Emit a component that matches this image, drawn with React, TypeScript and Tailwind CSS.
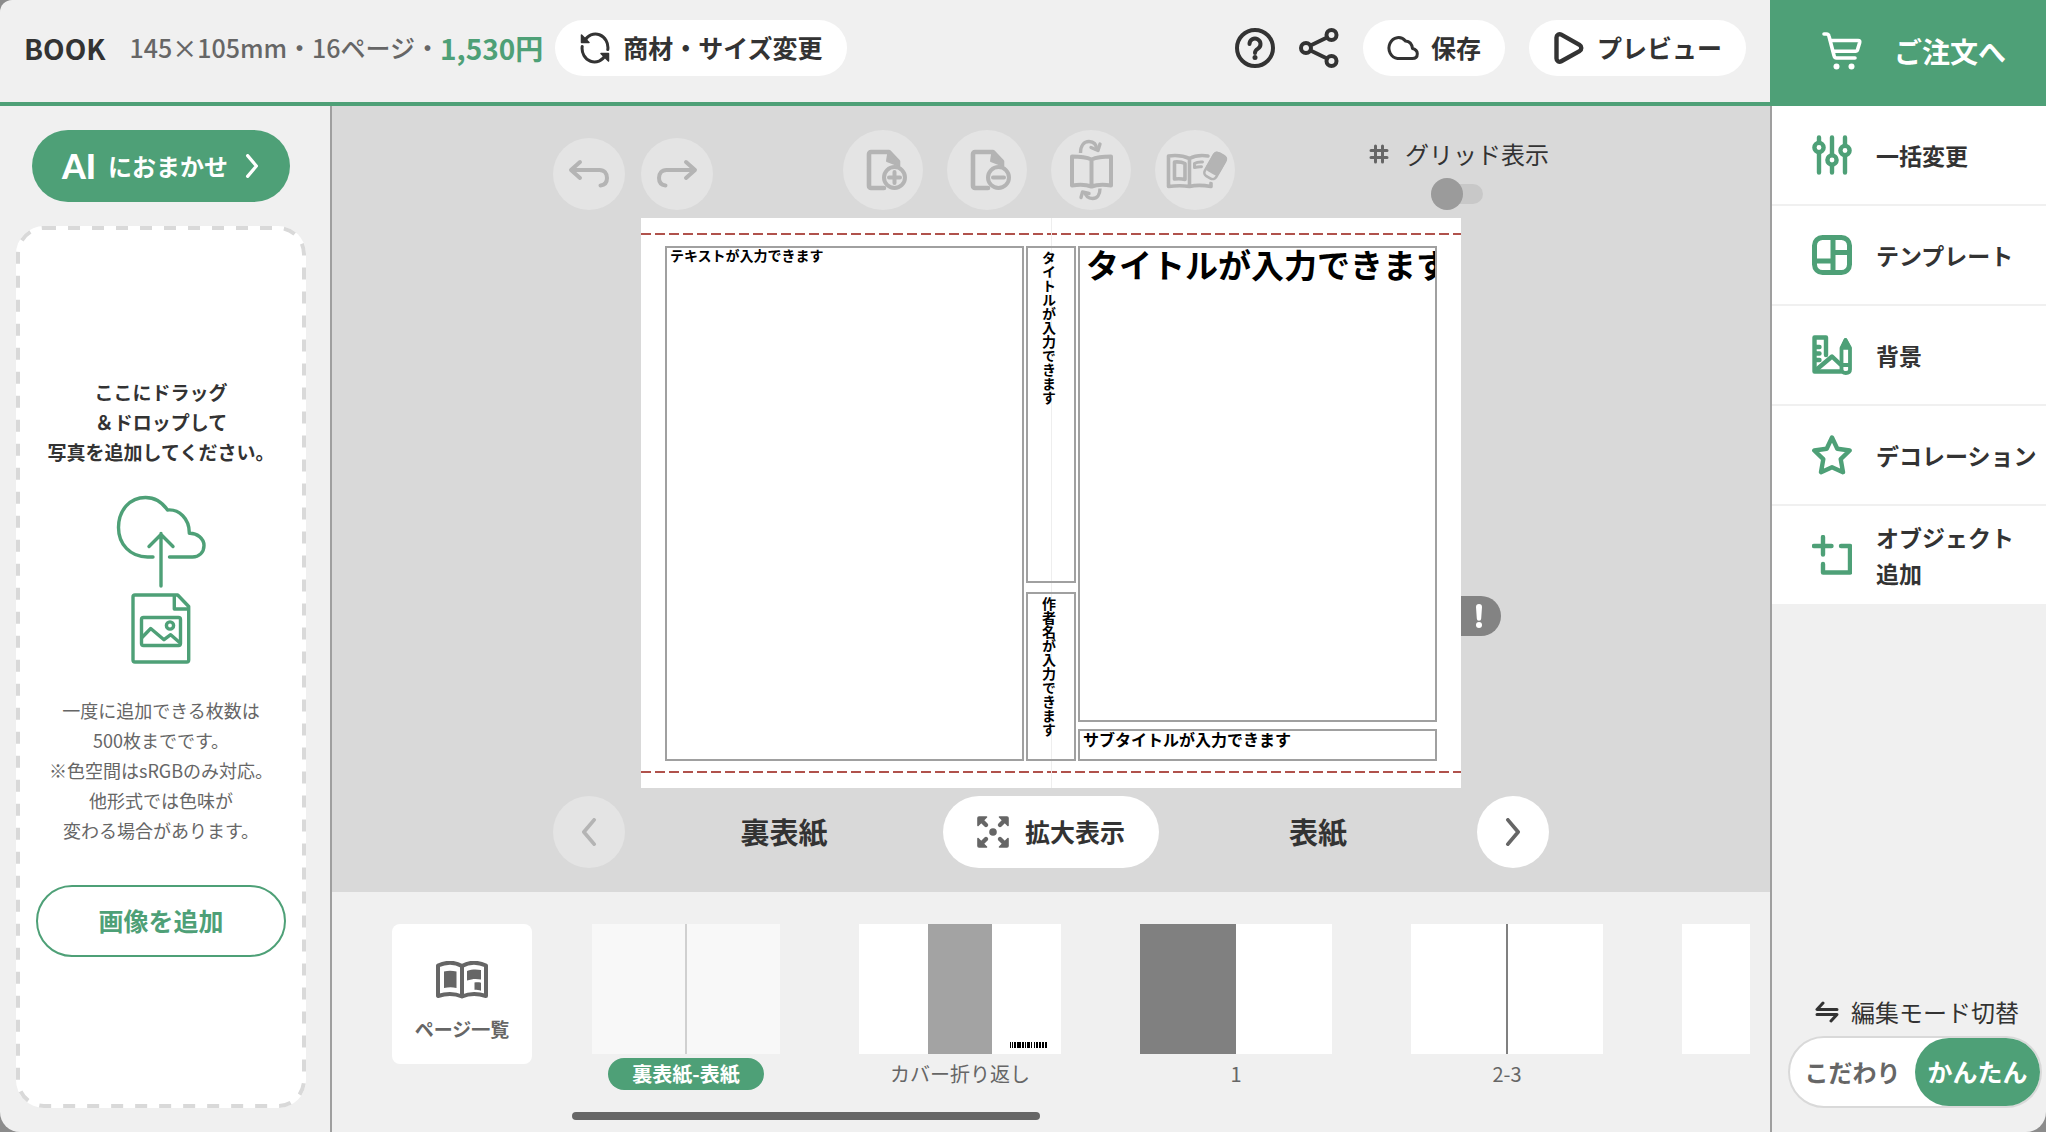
import type { ReactNode } from "react";

interface IconProps {
  className?: string;
}

interface MenuItem {
  label: ReactNode;
  key: string;
  icon: ReactNode;
}

const stroke = {
  fill: "none",
  stroke: "currentColor",
  strokeLinecap: "round",
  strokeLinejoin: "round",
} as const;

/* ---------- Header icons ---------- */

function RefreshIcon({ className }: IconProps) {
  return (
    <svg viewBox="0 0 32 32" className={className} {...stroke} strokeWidth={3}>
      <path d="M5.500 9A12.500 13.500 0 0 1 28.800 17.500" />
      <path d="M2.500 3v7.500H10z" fill="currentColor" strokeWidth={1.5} />
      <path d="M26.500 23A12.500 13.500 0 0 1 3.200 14.500" />
      <path d="M29.500 29v-7.500H22z" fill="currentColor" strokeWidth={1.5} />
    </svg>
  );
}

function HelpIcon({ className }: IconProps) {
  return (
    <svg viewBox="0 0 40 40" className={className} {...stroke} strokeWidth={4}>
      <circle cx="20" cy="20" r="18" />
      <path d="M14.500 16a5.500 5.500 0 1 1 8.500 4.600c-2 1.300-3 2.200-3 4.400" />
      <circle cx="20" cy="29.500" r="2.500" fill="currentColor" stroke="none" />
    </svg>
  );
}

function ShareIcon({ className }: IconProps) {
  return (
    <svg viewBox="0 0 40 40" className={className} {...stroke} strokeWidth={4}>
      <circle cx="7" cy="20" r="5" />
      <circle cx="32.500" cy="7" r="5" />
      <circle cx="32.500" cy="33" r="5" />
      <path d="M11.500 17.500 28 9.500M11.500 22.500 28 30.500" />
    </svg>
  );
}

function CloudIcon({ className }: IconProps) {
  return (
    <svg viewBox="0 0 32 32" className={className} {...stroke} strokeWidth={3}>
      <path d="M10.500 26.500A9.500 10.500 0 1 1 18.500 9c4 .4 6.500 3 7 7.500 3 .8 4.800 2.500 4.800 5.200 0 3-2 4.800-5 4.800z" />
    </svg>
  );
}

function PlayIcon({ className }: IconProps) {
  return (
    <svg viewBox="0 0 32 32" className={className} {...stroke} strokeWidth={4.400}>
      <path d="M3.500 5.500v21c0 2.600 2.600 4 4.800 2.800l18.200-10.200c2.400-1.400 2.400-4.800 0-6.200L8.300 2.700C6.100 1.500 3.500 2.900 3.500 5.500z" />
    </svg>
  );
}

function CartIcon({ className }: IconProps) {
  return (
    <svg viewBox="0 0 40 38" className={className} {...stroke} strokeWidth={3.6}>
      <path d="M2 2h2.500c1.500 0 2.200.8 2.500 2.200L12 23.500c.3 1.500 1 2.500 2.500 2.500H33" />
      <path d="M8.500 8.500h27.700c1.200 0 1.800.7 1.500 1.900l-2.200 7.400c-.3 1-1 1.500-2 1.500H11.500" />
      <circle cx="14.500" cy="34.500" r="3" fill="currentColor" stroke="none" />
      <circle cx="29.500" cy="34.500" r="3" fill="currentColor" stroke="none" />
    </svg>
  );
}

/* ---------- Canvas toolbar icons ---------- */

function UndoIcon({ className }: IconProps) {
  return (
    <svg viewBox="0 0 72 72" className={className} {...stroke} strokeWidth={4}>
      <path d="M19 32h27.500c5 0 7.500 3.500 7.500 8s-2.500 7-6.500 7.500M27 24l-9 8 9 8" />
    </svg>
  );
}

function RedoIcon({ className }: IconProps) {
  return (
    <svg viewBox="0 0 72 72" className={className} {...stroke} strokeWidth={4}>
      <path d="M53 32H25.500c-5 0-7.500 3.500-7.500 8s2.500 7 6.500 7.500M45 24l9 8-9 8" />
    </svg>
  );
}

function PageBase() {
  return (
    <>
      <path d="M41 58H28a2 2 0 0 1-2-2V24a2 2 0 0 1 2-2h18l9 9.500v5" strokeWidth={4.600} />
      <path d="M45.500 21.500 55 31.500v3.800L44 31z" fill="currentColor" strokeWidth={2} />
    </>
  );
}

function PageAddIcon({ className }: IconProps) {
  return (
    <svg viewBox="0 0 80 80" className={className} {...stroke}>
      <PageBase />
      <circle cx="51.500" cy="47.500" r="10.500" fill="#e4e4e4" strokeWidth={4} />
      <path d="M51.500 42v11M46 47.500h11" strokeWidth={4} />
    </svg>
  );
}

function PageRemoveIcon({ className }: IconProps) {
  return (
    <svg viewBox="0 0 80 80" className={className} {...stroke}>
      <PageBase />
      <circle cx="51.500" cy="47.500" r="10.500" fill="#e4e4e4" strokeWidth={4} />
      <path d="M46 47.500h11" strokeWidth={4} />
    </svg>
  );
}

function PageSwapIcon({ className }: IconProps) {
  return (
    <svg viewBox="0 0 80 80" className={className} {...stroke} strokeWidth={4}>
      <path d="M21 26.500c7 0 14 .5 19.500 3 5.500-2.500 12.500-3 19.500-3v29c-7-1-14-1-19.500 1-5.500-2-12.500-2-19.500-1zM40.500 29.500V56" />
      <path d="M29.500 23c0-7.500 3.500-11.500 8.500-11.500 4.500 0 7.500 3 8 8.500" strokeWidth={3.400} strokeLinecap="butt" />
      <path d="M40 17.500 47 20.500l2-6.500" strokeWidth={3.400} />
      <path d="M49 58.500c0 6.500-3 10-7.500 10-4 0-7-2.500-8-7" strokeWidth={3.400} strokeLinecap="butt" />
      <path d="M30 67.500 31.500 62 38 63.500" strokeWidth={3.400} />
    </svg>
  );
}

function EraserBookIcon({ className }: IconProps) {
  return (
    <svg viewBox="0 0 80 80" className={className} {...stroke} strokeWidth={3.600}>
      <path d="M53 26c-7-1-13-.5-18.500 2.500C28 25.500 21 25 13.500 26v30.500c7.500-1 15-1 21 0 6-1.500 13-1.500 21.500 0V53M34.500 28.500V56" />
      <path d="M19.500 32c4-.3 7.500 0 10.500 1.500v16c-3.500-1-6.500-1-10.500-.5z" />
      <path d="M39.500 37.500v-4c2-1.300 5-1.700 8-1.500M39.500 37.500c3-.8 5-1 7-.8" strokeWidth={3} />
      <g transform="rotate(30 60 36)">
        <rect x="51" y="20" width="18" height="32" rx="6" fill="#e4e4e4" stroke="none" />
        <rect x="53.500" y="23" width="13" height="26" rx="4" strokeWidth={2.600} />
        <rect x="53.500" y="23" width="13" height="20" rx="3" fill="currentColor" strokeWidth={2} />
      </g>
    </svg>
  );
}

function HashIcon({ className }: IconProps) {
  return (
    <svg viewBox="0 0 20 20" className={className} {...stroke} strokeWidth={3}>
      <path d="M6.500 2v16M13.500 2v16M2 6.500h16M2 13.500h16" />
    </svg>
  );
}

function ExpandIcon({ className }: IconProps) {
  return (
    <svg viewBox="0 0 32 32" className={className} fill="currentColor">
      {[0, 90, 180, 270].map((angle) => (
        <g key={angle} transform={`rotate(${angle} 16 16)`}>
          <path d="M2 1h7.500L1 9.500V2a1 1 0 0 1 1-1z" stroke="currentColor" strokeWidth={1.600} strokeLinejoin="round" />
          <path d="M5 5l4 4" stroke="currentColor" strokeWidth={4.400} strokeLinecap="round" />
        </g>
      ))}
      <circle cx="16" cy="16" r="3.800" />
    </svg>
  );
}

function Chevron({ className }: IconProps) {
  return (
    <svg viewBox="0 0 16 30" className={className} {...stroke} strokeWidth={4}>
      <path d="M2.500 2l11 13-11 13" />
    </svg>
  );
}

function PagesIcon({ className }: IconProps) {
  return (
    <svg viewBox="0 0 52 38" className={className}>
      <path
        d="M2 4.500C10 1 19 1 26 5c7-4 16-4 24-.5V35c-8-2.500-17-2.500-24 .5C19 32.500 10 32.500 2 35zM26 5v30"
        fill="none"
        stroke="currentColor"
        strokeWidth={4}
        strokeLinejoin="round"
      />
      <path d="M8 10.500c4-1 8-1 12.500 0V27c-4-1-8-1-12.500 0zM31 10c5-1.800 9-1.800 14-1v9.500c-5-1-9-.7-14 1zM38.500 21.500c2.500-.3 4.500-.3 6.500.3v8c-2-.7-4-1-6.500-1z" fill="currentColor" />
    </svg>
  );
}

function UploadDrawing({ className }: IconProps) {
  return (
    <svg viewBox="0 0 90 170" className={className} {...stroke} strokeWidth={3.400}>
      <path d="M37 62h-5.500C14 62 2.500 49 2.500 32.500 2.500 15 14 2.500 29.500 2.500c9 0 16.500 4.500 22 12.500 11.500-1 22 8.500 21.800 23.300C81 38 88 43.500 88 50.500c0 7-5 11.500-11.500 11.500H53.500" />
      <path d="M45 91V38.500M33 51.500l12-12 12 12" />
      <path d="M19 100h42.700L72.700 111.500V165a2 2 0 0 1-2 2H19a2 2 0 0 1-2-2v-63a2 2 0 0 1 2-2zM58.300 100.500V114h14" />
      <rect x="25.500" y="122.500" width="39" height="28" rx="2" />
      <path d="M26 142.500l8.700-9 13.300 11.200 6.700-5 9.500 8.300" />
      <circle cx="54" cy="130.500" r="3.600" />
    </svg>
  );
}

/* ---------- Side menu icons ---------- */

function SlidersIcon() {
  return (
    <svg viewBox="0 0 40 40" className="size-10" {...stroke} strokeWidth={4.400}>
      <path d="M7 2.500v35M20 2.500v35M33 2.500v35" />
      <circle cx="7" cy="12.500" r="4.600" fill="#fff" />
      <circle cx="20" cy="25" r="4.600" fill="#fff" />
      <circle cx="33" cy="15.500" r="4.600" fill="#fff" />
    </svg>
  );
}

function TemplateIcon() {
  return (
    <svg viewBox="0 0 40 40" className="size-10" {...stroke} strokeWidth={5}>
      <rect x="2.500" y="2.500" width="35" height="35" rx="8" />
      <path d="M21 3v34M21 17.500h16M3 26h18" />
    </svg>
  );
}

function BackgroundIcon() {
  return (
    <svg viewBox="0 0 40 40" className="size-10" {...stroke} strokeWidth={4.400}>
      <path d="M14 20V2.500H2.500v34h26M5 12h2.500M5 18.500h2.500M5 25h2.500" />
      <path d="M4 35 20 21.500l8.500 8" />
      <path d="M29.500 13 33.500 5 38 13v21.500c0 2-1.500 3.500-4.200 3.500s-4.300-1.500-4.300-3.500zM30 30h7.500" strokeWidth={3.800} />
      <path d="M30 13l3.500-8 4 8z" fill="currentColor" strokeWidth={3.600} />
    </svg>
  );
}

function StarIcon() {
  return (
    <svg viewBox="0 0 40 40" className="size-10" {...stroke} strokeWidth={4.400}>
      <path d="M20 2.500l5.300 11.300 12.400 1.700-9 8.700 2.300 13L20 32.300 9 37.200l2.300-13-9-8.700 12.400-1.700z" />
    </svg>
  );
}

function ObjectAddIcon() {
  return (
    <svg viewBox="0 0 40 40" className="size-10" {...stroke} strokeWidth={4.400}>
      <path d="M11 2v17.500M2 11h17.500M29 11h9v26.500H11V29" />
    </svg>
  );
}

function SwapIcon({ className }: IconProps) {
  return (
    <svg viewBox="0 0 24 22" className={className} {...stroke} strokeWidth={3}>
      <path d="M8 2 2 8.500h20M2 13.500h20L16 20" />
    </svg>
  );
}

const menuItems: MenuItem[] = [
  { key: "bulk", label: "一括変更", icon: <SlidersIcon /> },
  { key: "template", label: "テンプレート", icon: <TemplateIcon /> },
  { key: "background", label: "背景", icon: <BackgroundIcon /> },
  { key: "decoration", label: "デコレーション", icon: <StarIcon /> },
  {
    key: "object",
    label: (
      <>
        オブジェクト
        <br />
        追加
      </>
    ),
    icon: <ObjectAddIcon />,
  },
];

const tools = [
  { label: "ページを追加", Icon: PageAddIcon },
  { label: "ページを削除", Icon: PageRemoveIcon },
  { label: "ページを入れ替え", Icon: PageSwapIcon },
  { label: "ページを消去", Icon: EraserBookIcon },
];

function Header() {
  const pill =
    "flex h-14 items-center gap-3 rounded-full bg-white px-6 text-[25px] font-bold whitespace-nowrap";

  return (
    <header className="flex h-[106px] shrink-0">
      <div className="flex min-w-0 flex-1 items-start justify-between border-b-4 border-[#4ea077] px-6 pt-5">
        <div className="flex h-14 items-center whitespace-nowrap">
          <h1 className="mr-6 text-[28px] font-bold">BOOK</h1>
          <p className="text-[25px] font-medium text-[#666]">
            145×105mm・16ページ・
          </p>
          <p className="mr-3 text-[28px] font-bold text-[#4ea077]">1,530円</p>
          <button className={pill}>
            <RefreshIcon className="size-8" />
            商材・サイズ変更
          </button>
        </div>
        <div className="flex h-14 items-center gap-6">
          <button aria-label="ヘルプ">
            <HelpIcon className="size-10" />
          </button>
          <button aria-label="共有">
            <ShareIcon className="size-10" />
          </button>
          <button className={pill}>
            <CloudIcon className="size-8" />
            保存
          </button>
          <button className={pill}>
            <PlayIcon className="size-8" />
            プレビュー
          </button>
        </div>
      </div>
      <a
        href="#order"
        className="flex w-[276px] shrink-0 items-center justify-center gap-8 bg-[#4ea077] pb-1 pl-3 text-[28px] font-bold text-white"
      >
        <CartIcon className="h-[38px] w-10" />
        ご注文へ
      </a>
    </header>
  );
}

function PhotoPanel() {
  return (
    <aside className="flex w-[332px] shrink-0 flex-col border-r-2 border-[#9f9f9f] pt-6 pr-6 pb-6 pl-4">
      <button className="mx-4 flex h-[72px] items-center justify-center gap-3 rounded-full bg-[#4ea077] text-[24px] font-bold text-white">
        <span className="font-[Lato,sans-serif] text-[34px] leading-none font-black">
          AI
        </span>
        におまかせ
        <Chevron className="ml-1 h-6 w-4" />
      </button>

      {/* Drop zone */}
      <div className="relative mt-6 flex flex-1 flex-col items-center justify-center rounded-[28px] bg-white text-center">
        <svg className="pointer-events-none absolute inset-0 size-full" aria-hidden="true">
          <rect
            x="2"
            y="2"
            rx="26"
            className="h-[calc(100%-4px)] w-[calc(100%-4px)] fill-none stroke-[#d9d9d9] stroke-4"
            strokeDasharray="12 12"
          />
        </svg>
        <p className="text-[19px] leading-[30px] font-bold">
          ここにドラッグ
          <br />
          ＆ドロップして
          <br />
          写真を追加してください。
        </p>
        <UploadDrawing className="mt-7 mb-[30px] h-[170px] w-[90px] text-[#4ea077]" />
        <p className="text-[18px] leading-[30px] text-[#666]">
          一度に追加できる枚数は
          <br />
          500枚までです。
          <br />
          ※色空間はsRGBのみ対応。
          <br />
          他形式では色味が
          <br />
          変わる場合があります。
        </p>
        <button className="mt-10 h-[72px] w-[250px] rounded-full border-2 border-[#4ea077] text-[25px] font-bold text-[#4ea077]">
          画像を追加
        </button>
      </div>
    </aside>
  );
}

function Toolbar() {
  return (
    <div className="flex h-20 items-end justify-between">
      <div className="flex gap-4">
        <button aria-label="元に戻す" className="size-[72px] rounded-full bg-[#e4e4e4] text-[#b4b4b4]">
          <UndoIcon className="size-full" />
        </button>
        <button aria-label="やり直す" className="size-[72px] rounded-full bg-[#e4e4e4] text-[#b4b4b4]">
          <RedoIcon className="size-full" />
        </button>
      </div>
      <div className="flex gap-6">
        {tools.map(({ label, Icon }) => (
          <button
            key={label}
            aria-label={label}
            className="size-20 rounded-full bg-[#e4e4e4] text-[#b4b4b4]"
          >
            <Icon className="size-full" />
          </button>
        ))}
      </div>
      <div className="flex flex-col items-center gap-2">
        <label
          htmlFor="grid-toggle"
          className="flex h-8 items-center gap-3 text-[24px] whitespace-nowrap"
        >
          <HashIcon className="mx-1 size-5 text-[#666]" />
          グリッド表示
        </label>
        <input
          id="grid-toggle"
          type="checkbox"
          className="relative flex h-8 w-[52px] appearance-none items-center rounded-full before:absolute before:left-0 before:z-10 before:size-8 before:rounded-full before:bg-[#9b9b9b] after:h-5 after:w-full after:rounded-full after:bg-[#c8c8c8]"
        />
      </div>
    </div>
  );
}

const cutLine =
  "h-[2px] bg-[repeating-linear-gradient(90deg,#b0524c_0px,#b0524c_10px,transparent_10px,transparent_14px)]";

function Spread() {
  const frame = "border-2 border-[#a0a0a0] whitespace-nowrap";
  const spine = `${frame} flex items-center pt-[3px] pr-1 [writing-mode:vertical-rl]`;

  return (
    <div className="relative mx-[88px] my-2 bg-white py-[15px] font-bold text-black">
      <div className="absolute inset-y-0 left-1/2 w-px bg-[#eee]" />
      <div className={cutLine} />
      <div className="mx-6 mt-[11px] mb-[10px] grid h-[515px] grid-cols-[359fr_50fr_359fr] gap-[2px]">
        <div className={`${frame} pl-[3px] text-[14px] leading-[14px]`}>
          テキストが入力できます
        </div>
        <div className="relative flex flex-col gap-[9px] text-[14px] leading-4">
          <div className={`${spine} flex-[339]`}>タイトルが入力できます</div>
          <div className={`${spine} flex-[167]`}>作者名が入力できます</div>
        </div>
        <div className="flex min-w-0 flex-col gap-[7px]">
          <div className={`${frame} flex-1 overflow-hidden pl-[6px] text-[33px] leading-8`}>
            タイトルが入力できます
          </div>
          <div className={`${frame} h-8 pl-[3px] text-[16px] leading-4`}>
            サブタイトルが入力できます
          </div>
        </div>
      </div>
      <div className={cutLine} />

      {/* Warning badge */}
      <button
        aria-label="警告"
        className="absolute top-[378px] left-full flex size-10 items-center justify-center rounded-r-full bg-[#838383] pr-1 text-white"
      >
        <svg viewBox="0 0 8 24" className="h-6 w-2" fill="currentColor">
          <path d="M1 3a3 3 0 0 1 6 0l-.8 11.500a2.200 2.200 0 0 1-4.400 0z" />
          <circle cx="4" cy="21" r="3" />
        </svg>
      </button>
    </div>
  );
}

function PageNav() {
  return (
    <div className="flex h-[72px] items-center text-center text-[29px] font-bold">
      <button
        aria-label="前のページ"
        className="flex size-[72px] items-center justify-center rounded-full bg-[#e4e4e4] text-[#b4b4b4]"
      >
        <Chevron className="h-7 w-4 rotate-180" />
      </button>
      <span className="flex-1">裏表紙</span>
      <button className="flex h-full w-[216px] items-center justify-center gap-4 rounded-full bg-white text-[25px]">
        <ExpandIcon className="size-8 text-[#666]" />
        拡大表示
      </button>
      <span className="flex-1">表紙</span>
      <button
        aria-label="次のページ"
        className="flex size-[72px] items-center justify-center rounded-full bg-white text-[#666]"
      >
        <Chevron className="h-7 w-4" />
      </button>
    </div>
  );
}

function Barcode() {
  return (
    <svg viewBox="0 0 37 6" className="h-[6px] w-[37px]" fill="#000">
      {[
        [0, 1], [2, 1], [4, 2], [7, 4], [12, 2], [15, 1], [17, 3], [21, 1],
        [24, 1], [26, 2], [29, 2], [32, 2], [35, 2],
      ].map(([x, w]) => (
        <rect key={x} x={x} y="0" width={w} height="6" />
      ))}
    </svg>
  );
}

function PageStrip() {
  const item = "flex shrink-0 flex-col items-center gap-1";
  const label = "flex h-8 items-center text-[20px]";

  return (
    <section className="flex h-[240px] shrink-0 bg-[#f0f0f0] pt-8 pr-5 pl-[60px]">
      <button className="flex size-[140px] shrink-0 flex-col items-center justify-center gap-4 rounded-lg bg-white pt-4 text-[19px] leading-7 font-bold text-[#666]">
        <PagesIcon className="h-[38px] w-[52px]" />
        ページ一覧
      </button>
      <div className="ml-10 flex min-w-0 flex-1 flex-col justify-between overflow-hidden pb-3">
        <ul className="flex gap-[79px] pl-5 text-[#666]">
          <li className={item}>
            <div className="flex h-[130px] w-[188px] justify-center bg-[#f8f8f8]">
              <div className="w-[2px] bg-[#d0d0d0]" />
            </div>
            <span className={`${label} rounded-full bg-[#4ea077] px-6 font-bold text-white`}>
              裏表紙-表紙
            </span>
          </li>
          <li className={item}>
            <div className="flex h-[130px] w-[202px] items-end justify-between bg-white">
              <div className="ml-[69px] h-full w-16 bg-[#a3a3a3]" />
              <div className="mr-[14px] mb-[6px]">
                <Barcode />
              </div>
            </div>
            <span className={label}>カバー折り返し</span>
          </li>
          <li className={item}>
            <div className="h-[130px] w-[192px] bg-white">
              <div className="h-full w-1/2 bg-[#808080]" />
            </div>
            <span className={label}>1</span>
          </li>
          <li className={item}>
            <div className="flex h-[130px] w-[192px] justify-center bg-white">
              <div className="w-[2px] bg-[#808080]" />
            </div>
            <span className={label}>2-3</span>
          </li>
          <li className={item}>
            <div className="h-[130px] w-[192px] bg-white" />
          </li>
        </ul>
        <div className="h-2 w-[468px] rounded-full bg-[#666]" />
      </div>
    </section>
  );
}

function SideMenu() {
  return (
    <aside className="flex w-[276px] shrink-0 flex-col justify-between border-l-2 border-[#9f9f9f]">
      <nav>
        {menuItems.map(({ key, label, icon }) => (
          <button
            key={key}
            className="flex h-[100px] w-full items-center gap-6 border-b-2 border-[#f0f0f0] bg-white pl-10 text-left text-[23px] leading-9 font-bold whitespace-nowrap"
          >
            <span className="shrink-0 text-[#4ea077]">{icon}</span>
            {label}
          </button>
        ))}
      </nav>
      <div className="flex flex-col items-center gap-2 pr-1 pb-6 pl-4">
        <p className="flex h-8 items-center gap-3 pl-1 text-[24px] whitespace-nowrap">
          <SwapIcon className="h-[22px] w-6" />
          編集モード切替
        </p>
        <div className="flex h-[72px] w-full rounded-full border-2 border-[#d9d9d9] bg-white font-bold">
          <button aria-pressed="false" className="flex-1 text-[24px] text-[#666]">
            こだわり
          </button>
          <button
            aria-pressed="true"
            className="w-[125px] rounded-full bg-[#4ea077] text-[25px] text-white"
          >
            かんたん
          </button>
        </div>
      </div>
    </aside>
  );
}

export default function App() {
  return (
    <div
      lang="ja"
      className="min-h-screen bg-[#8c8c8c] font-['Noto_Sans_CJK_JP',sans-serif] text-[#333]"
    >
      <div className="flex min-h-screen flex-col overflow-hidden rounded-tl-[12px] rounded-b-[20px] bg-[#f0f0f0]">
        <Header />
        <div className="flex flex-1">
          <PhotoPanel />
          <div className="flex min-w-0 flex-1 flex-col">
            <main className="flex-1 bg-[#d9d9d9] py-6">
              <div className="mx-auto max-w-[996px]">
                <Toolbar />
                <Spread />
                <PageNav />
              </div>
            </main>
            <PageStrip />
          </div>
          <SideMenu />
        </div>
      </div>
    </div>
  );
}
